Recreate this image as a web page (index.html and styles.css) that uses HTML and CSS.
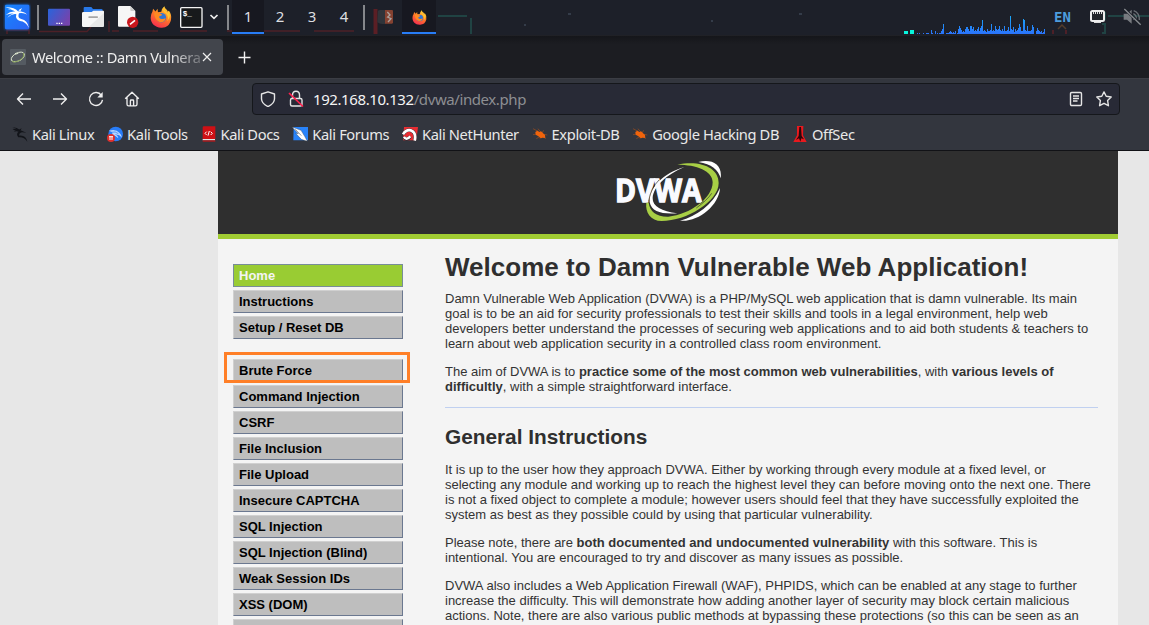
FILE: index.html
```
<!DOCTYPE html>
<html lang="en">
<head>
<meta charset="utf-8">
<title>Welcome :: Damn Vulnerable Web Application</title>
<link rel="stylesheet" href="styles.css">
</head>
<body>
<svg class="defs" width="0" height="0" aria-hidden="true">
  <defs>
    <linearGradient id="kali" x1="0" y1="0" x2="1" y2="1"><stop offset="0" stop-color="#1687ff"/><stop offset="1" stop-color="#2b62f4"/></linearGradient>
    <linearGradient id="desk" x1="0" y1="0" x2="1" y2="0.5"><stop offset="0" stop-color="#2864dc"/><stop offset="1" stop-color="#7444ad"/></linearGradient>
    <linearGradient id="fox" x1="0.8" y1="0" x2="0.3" y2="1"><stop offset="0" stop-color="#ffdc3c"/><stop offset="0.45" stop-color="#ff7e25"/><stop offset="1" stop-color="#f52c50"/></linearGradient>
    <linearGradient id="bars" gradientUnits="userSpaceOnUse" x1="0" y1="16" x2="0" y2="34"><stop offset="0" stop-color="#18a8f8"/><stop offset="1" stop-color="#2b73fa"/></linearGradient>
    <symbol id="dragon" viewBox="0 0 48 48">
      <path d="M1 3Q16 4 24 12L43 20L30 19Q20 21 22 29Q42 27 46 47Q36 32 19 34Q11 23 20 17Q14 14 5 17Q11 12 17 12Q12 7 1 3ZM2 9Q12 7 20 14L7 13ZM20 11L29 7L25 14Z"/>
    </symbol>
    <symbol id="firefox" viewBox="0 0 64 64">
      <path fill="url(#fox)" d="M7 17L9 8L16 16L22 8L23 18L33 17Q34 7 42 1Q42 8 50 12Q51 14 52 17L55 14Q64 25 61 41C57 57 47 64 32 63C14 62 2 50 2 34Q2 24 7 17Z"/>
      <circle cx="33" cy="34" r="14" fill="#3175d3"/>
      <path fill="#ff8a22" d="M12 22Q17 16 27 20L35 25Q35 30 27 30Q26 39 36 38Q43 38 45 34Q45 48 29 47Q13 41 12 22Z"/>
      <path fill="#ffc530" d="M40 2Q34 15 47 22Q55 31 50 45Q64 27 53 14L52 22Q40 12 40 2Z"/>
    </symbol>
    <symbol id="bug" viewBox="0 0 48 42">
      <path d="M3 5L20 14M3 23L21 20M13 35L25 28M18 5L25 14M35 10L30 18M46 24L36 22M41 36L35 28M24 35L27 26" fill="none" stroke="#a04f1c" stroke-width="2"/>
      <path d="M10 15L16 11L22 15L27 13L39 24L40 33L31 32L27 34L18 27L11 23Z" fill="#f0640c"/>
    </symbol>
  </defs>
</svg>

<header class="panel">
  <svg class="circuit" width="1149" height="36" viewBox="0 0 1149 36" fill="none">
    <path stroke="#4d2027" stroke-width="1.5" d="M39 31.5H87L91 27M109 21V32M112 31H119M133 31H158M180 31H207M227 31H300M314 31H354M7 34V30H29V34"/>
    <path stroke="#5b1f25" stroke-width="4" d="M375.5 9V34"/>
    <path stroke="#204343" stroke-width="2" d="M438 16H467M434 18V34M471 18V34M1108 16H1149M1102 13H1105V20M1102 24H1105V33H1102"/>
    <path stroke="#543d2b" stroke-width="1.5" d="M1058 29L1062 25L1066 29"/>
    <path stroke="#4d2027" stroke-width="2" d="M1053 30V34M1066 30V34"/>
    <path fill="#343c49" d="M524 24h2v2h-2zM568 13h3v2h-3zM711 20h2v2h-2zM799 13h3v2h-3z"/>
  </svg>
  <div class="launchers">
    <svg width="28" height="30" viewBox="0 0 84 90">
      <rect class="glow" x="6" y="8" width="73" height="74" rx="4" fill="url(#kali)"/>
      <g fill="#fff"><path d="M7 16Q34 15 45 28Q66 29 72 38L67 35Q55 32 48 34Q42 48 55 51Q73 54 78 78Q68 58 51 57Q36 52 40 37Q26 31 8 39Q23 27 37 29Q26 20 7 16ZM10 23Q23 20 34 26Q21 22 10 23ZM13 47Q26 33 38 35Q24 37 13 47ZM46 25L57 18L52 28Z"/></g>
    </svg>
    <i class="divider"></i>
    <svg class="desktop-icon" width="22" height="18" viewBox="0 0 66 54"><rect width="66" height="51" y="2" rx="3" fill="url(#desk)"/><path fill="#fff" d="M25 44h4v4h-4zM32 44h4v4h-4zM39 44h4v4h-4z"/></svg>
    <svg class="folder-icon" width="22" height="20" viewBox="0 0 66 60"><path fill="#2878e8" d="M5 3q0-3 3-3h20l5 6h25q4 0 4 4v15H5z"/><path fill="#f7f7f7" d="M2 15h27l5-4h30q2 0 2 3v42q0 4-4 4H4q-4 0-4-4V18z"/><path fill="#dedede" d="M66 18v38q0 4-4 4H20z" opacity=".6"/><rect x="19" y="28" width="29" height="5" rx="2" fill="#a6a6a6"/></svg>
    <svg class="document-icon" width="21" height="22" viewBox="0 0 63 66"><path fill="#f6f6f6" d="M3 0h34l15 15v44q0 3-3 3H3q-3 0-3-3V3q0-3 3-3"/><path fill="#ccc" d="M37 0l15 15H40q-3 0-3-3z"/><circle cx="44" cy="49" r="17" fill="#c9171d"/><path stroke="#fff" stroke-width="5" d="M36 55l15-12"/></svg>
    <svg class="firefox-icon" width="22" height="22"><use href="#firefox"/></svg>
    <svg class="terminal-icon" width="23" height="21" viewBox="0 0 69 63"><rect x="2" y="2" width="64" height="59" rx="3" fill="#17191b" stroke="#f4f4f4" stroke-width="4"/><text x="8" y="28" class="terminal-text">$_</text></svg>
    <svg class="chevron" width="10" height="8" viewBox="0 0 10 8"><path d="M1.5 2L5 5.3L8.5 2" fill="none" stroke="#eee" stroke-width="1.7"/></svg>
    <i class="divider"></i>
  </div>
  <nav class="spaces"><b class="active">1</b><b>2</b><b>3</b><b>4</b></nav>
  <i class="divider second"></i>
  <div class="windows">
    <svg class="burp" width="16" height="14" viewBox="0 0 48 42"><path fill="#30343a" d="M3 2Q12-2 24 0V42Q10 43 1 37z"/><path fill="#854231" d="M24 0H45Q48 0 48 4V37Q48 41 45 41H24z"/><path d="M31 6L39 15L32 21L42 26L33 36" fill="none" stroke="#aaa29e" stroke-width="4"/></svg>
    <div class="window active"><svg width="15" height="15"><use href="#firefox"/></svg></div>
  </div>
  <div class="tray">
    <svg class="monitor" width="142" height="36" viewBox="903 0 142 36" shape-rendering="crispEdges">
      <path fill="#08f5dc" d="M904 31h4v3h-4zM910 30h4v4h-4z"/>
      <path fill="url(#bars)" d="M917 34V33h1V34h1V33h1V34h3V33h1V34h2V33h2V34h0V33h1V34h2V30h1V33h1V34h2V31h1V34h1V33h1V34h1V33h2V31h1V29h1V24h1V34h2V33h3V32h1V31h1V32h1V33h1V32h1V33h1V31h1V34h1V33h1V29h1V26h1V28h1V30h1V32h1V31h1V32h1V29h1V27h2V29h1V31h1V26h2V29h1V27h1V31h1V30h1V31h1V29h1V27h1V31h1V28h1V26h1V20h1V31h1V30h1V31h1V32h1V29h1V31h2V30h1V24h1V31h1V30h1V31h1V26h1V29h1V30h1V29h1V26h1V30h1V31h1V29h1V31h1V26h1V31h2V30h1V27h1V31h1V16h1V29h1V30h1V27h1V32h1V29h1V31h1V30h1V28h1V24h1V27h1V31h2V19h1V20h1V30h1V31h1V26h1V31h3V30h1V25h1V27h1V34h2V31h1V28h1V30h1V31h1V32h1V31h1V33h1V32h1V29h1V34Z"/>
    </svg>
    <span class="lang">EN</span>
    <svg width="15" height="14" viewBox="0 0 15 14"><rect x="1" y="1" width="13" height="10" rx="1.5" fill="#22252b" stroke="#eee" stroke-width="2"/><path d="M3.5 2v2M5.5 2v2M7.5 2v2M9.5 2v2M11.5 2v2M4 12.5h7" stroke="#ddd"/></svg>
    <svg class="mute" width="19" height="18" viewBox="0 0 57 54" fill="none"><path fill="#777a7f" d="M2 17H12L26 5V47L12 35H2z"/><path d="M32 8Q50 15 49 36M31 17Q43 23 39 38M32 27V36" stroke="#696d73" stroke-width="4"/><path d="M4 2L53 49" stroke="#1c2028" stroke-width="8"/><path d="M4 3L53 50" stroke="#888b90" stroke-width="4"/></svg>
  </div>
</header>

<div class="tabs">
  <div class="tab">
    <svg width="16" height="16" viewBox="0 0 48 48"><rect width="48" height="48" rx="3" fill="#555b62"/><path d="M15 14Q38 4 43 15C45 29 26 39 11 38Q0 35 6 24Q11 14 25 13" fill="none" stroke="#dce6cf" stroke-width="3"/><path d="M40 12Q47 26 23 37Q10 42 6 36" fill="none" stroke="#88a355" stroke-width="3"/></svg>
    <span>Welcome :: Damn Vulnera</span>
    <svg class="close" width="10" height="10"><path d="M1 1L9 9M9 1L1 9" stroke="#eee" stroke-width="1.2"/></svg>
  </div>
  <svg class="new-tab" width="13" height="13"><path d="M6.5 .5V12.5M.5 6.5H12.5" stroke="#f2f2f2" stroke-width="1.4"/></svg>
</div>

<div class="toolbar">
  <div class="nav-icons">
    <svg viewBox="0 0 16 16"><path d="M15 8H1.5M7 2.5L1.5 8L7 13.5"/></svg>
    <svg viewBox="0 0 16 16"><path d="M1 8H14.5M9 2.5L14.5 8L9 13.5"/></svg>
    <svg viewBox="0 0 16 16"><path d="M13.4 4.3A6.5 6.5 0 1 0 14.5 8.8"/><path d="M14.7 1V6.5H9.3z" fill="#eee" stroke="none"/></svg>
    <svg viewBox="0 0 16 16"><path d="M1.2 7.8L8 1.2L14.8 7.8M3 6.3V13.2Q3 14.8 4.6 14.8H11.4Q13 14.8 13 13.2V6.3M6.4 14.5V9.7Q6.4 9 7.1 9H8.9Q9.6 9 9.6 9.7V14.5"/></svg>
  </div>
  <div class="address">
    <svg width="16" height="16" viewBox="0 0 16 16"><path d="M8 .8L14.5 3V8Q14.2 12.8 8 15.6Q1.8 12.8 1.5 8V3z"/></svg>
    <svg class="lock" width="16" height="18" viewBox="0 0 16 18"><path d="M4.5 8V5Q4.5 1.2 8 1.2Q11.5 1.2 11.5 5V8M3.5 8.5H12.5Q14 8.5 14 10V14.5Q14 16 12.5 16H4Q2.5 16 2.5 14.5V10Q2.5 8.5 4 8.5"/><path d="M1 3L15 16.5" stroke="#ff204e" stroke-width="1.7"/></svg>
    <div class="url"><span>192.168.10.132</span>/dvwa/index.php</div>
    <svg class="reader" width="14" height="16" viewBox="0 0 14 16"><rect x="1.5" y="1.5" width="11" height="13" rx="1.2"/><path d="M4 5H10M4 7.5H10M4 10H8.5"/></svg>
    <svg class="star" width="16" height="16" viewBox="0 0 16 16"><path d="M8 .9L10.2 5.3L15.2 6L11.6 9.5L12.4 14.7L8 12.3L3.6 14.7L4.4 9.5L.8 6L5.8 5.3z"/></svg>
  </div>
</div>

<nav class="bookmarks">
  <div><svg class="ink"><use href="#dragon"/></svg><span>Kali Linux</span></div>
  <div><svg viewBox="0 0 48 48"><circle cx="26" cy="24" r="22" fill="#287cf7"/><path d="M6 14Q27 8 37 20Q43 24 45 35Q36 24 23 26Q33 27 34 37Q26 30 14 25Q22 20 6 14" fill="#b7d5ff"/><path d="M12 19Q26 15 34 23" fill="none" stroke="#287cf7" stroke-width="2"/><circle cx="12" cy="36" r="12" fill="#df302d"/><path d="M6 32H18M9 32V42M15 32V42" stroke="#fff" stroke-width="3"/></svg><span>Kali Tools</span></div>
  <div><svg viewBox="0 0 48 48"><path fill="#cf1015" d="M9 1H43V39H5V5Q5 1 9 1"/><path fill="#e5e5e5" d="M5 39H42V43H5z"/><path fill="#b81518" d="M5 43H43V47H5z"/><path d="M17 17L12 22L17 27M29 17L34 22L29 27M25 15L21 29" fill="none" stroke="#fff" stroke-width="3"/></svg><span>Kali Docs</span></div>
  <div><svg viewBox="0 0 48 48"><path fill="#2883fa" d="M5 3H48V43H4z"/><path fill="#fff" stroke="#27303b" stroke-width="1" d="M0 3L27 13L38 31L46 46L28 40L11 22L19 23z"/><path d="M10 10L28 29" stroke="#27303b" stroke-width="1.5"/></svg><span>Kali Forums</span></div>
  <div><svg viewBox="0 0 48 48"><path fill="#e82d32" d="M6 3H48L43 43H3z"/><path d="M4 25Q12 10 26 13Q44 20 38 43M6 33Q13 46 25 32" fill="none" stroke="#252b32" stroke-width="10"/><path d="M3 25Q12 10 26 13Q44 20 38 44" fill="none" stroke="#fff" stroke-width="8"/><path d="M6 32Q12 45 25 31" fill="none" stroke="#fff" stroke-width="7"/></svg><span>Kali NetHunter</span></div>
  <div><svg><use href="#bug"/></svg><span>Exploit-DB</span></div>
  <div><svg><use href="#bug"/></svg><span>Google Hacking DB</span></div>
  <div><svg viewBox="0 0 48 48"><path fill="#e8191e" d="M15 0H34L33 28L44 48H4L15 28z"/><path fill="#29090b" d="M22 3H27L29 30L36 40L28 37L25 47L21 37L12 42L20 30z"/></svg><span>OffSec</span></div>
</nav>

<div class="viewport">
  <div class="site">
    <header class="site-header">
      <svg width="110" height="62" viewBox="75 36 330 186">
        <g fill="#fff"><path d="M325 42C365 32 398 48 392 91C385 65 365 48 325 42Z"/><path d="M390 120C387 174 322 224 270 218C320 205 368 170 390 120Z"/><path d="M283 57C220 75 176 120 179 163C185 192 215 199 262 196C215 190 187 175 188 150C190 115 230 80 283 57Z"/></g>
        <text x="75" y="162" textLength="260" lengthAdjust="spacingAndGlyphs" class="logo-text">DVWA</text>
        <path d="M176 160Q181 122 207 96" fill="none" stroke="#2f2f2f" stroke-width="2"/>
        <path fill="#a8cf45" d="M262 50C335 36 386 61 386 105C386 160 290 219 215 219C182 219 165 192 169 164L176 164C179 190 200 207 235 206C300 200 368 150 368 103C368 68 320 50 262 50Z"/>
        <path d="M365 136Q352 156 319 180M342 158L331 167" fill="none" stroke="#2f2f2f" stroke-width="2"/>
      </svg>
    </header>
    <div class="columns">
      <nav class="menu">
        <ul><li class="selected">Home</li><li>Instructions</li><li>Setup / Reset DB</li></ul>
        <ul><li class="marked">Brute Force</li><li>Command Injection</li><li>CSRF</li><li>File Inclusion</li><li>File Upload</li><li>Insecure CAPTCHA</li><li>SQL Injection</li><li>SQL Injection (Blind)</li><li>Weak Session IDs</li><li>XSS (DOM)</li><li></li></ul>
      </nav>
      <main>
        <h1>Welcome to Damn Vulnerable Web Application!</h1>
        <p>Damn Vulnerable Web Application (DVWA) is a PHP/MySQL web application that is damn vulnerable. Its main<br>goal is to be an aid for security professionals to test their skills and tools in a legal environment, help web<br>developers better understand the processes of securing web applications and to aid both students &amp; teachers to<br>learn about web application security in a controlled class room environment.</p>
        <p>The aim of DVWA is to <b>practice some of the most common web vulnerabilities</b>, with <b>various levels of<br>difficultly</b>, with a simple straightforward interface.</p>
        <hr>
        <h2>General Instructions</h2>
        <p>It is up to the user how they approach DVWA. Either by working through every module at a fixed level, or<br>selecting any module and working up to reach the highest level they can before moving onto the next one. There<br>is not a fixed object to complete a module; however users should feel that they have successfully exploited the<br>system as best as they possible could by using that particular vulnerability.</p>
        <p>Please note, there are <b>both documented and undocumented vulnerability</b> with this software. This is<br>intentional. You are encouraged to try and discover as many issues as possible.</p>
        <p>DVWA also includes a Web Application Firewall (WAF), PHPIDS, which can be enabled at any stage to further<br>increase the difficulty. This will demonstrate how adding another layer of security may block certain malicious<br>actions. Note, there are also various public methods at bypassing these protections (so this can be seen as an</p>
      </main>
    </div>
  </div>
</div>
</body>
</html>
```
FILE: styles.css
```
*, *::after { box-sizing: border-box; }
html, body { margin: 0; height: 625px; overflow: hidden; }
body { display: flex; flex-direction: column; background: #e7e7e7; font-family: "Noto Sans", sans-serif; }
svg { flex: none; display: block; }
.defs { position: absolute; }

/* Desktop panel */
.panel { position: relative; flex: none; height: 36px; display: flex; background: #1d2029; border-bottom: 1px solid #202126; }
.panel > * { position: relative; }
.panel > .circuit { position: absolute; left: 0; top: 0; }
.launchers { display: flex; align-items: center; width: 229px; padding-left: 3px; height: 34px; }
.glow { filter: drop-shadow(0 0 4px #1478ff); }
.divider { flex: none; width: 2px; height: 25px; background: #85878b; }
.launchers .divider { margin-left: 6px; }
.desktop-icon { margin-left: 9px; }
.folder-icon { margin-left: 12px; }
.document-icon { margin-left: 14px; }
.firefox-icon { margin-left: 11px; }
.terminal-icon { margin-left: 8px; }
.terminal-text { fill: #fff; font: bold 23px "Liberation Mono", monospace; }
.chevron { margin-left: 6px; }
.launchers .chevron + .divider { margin-left: 8px; }
.spaces { display: flex; margin-left: 3px; }
.spaces b { width: 32px; height: 34px; font: 15px/33px "Noto Sans", sans-serif; text-align: center; color: #dedfe0; }
.spaces .active, .window.active { background: #171820; border-bottom: 2px solid #287df6; }
.second { margin: 5px 0 0 3px; }
.windows { display: flex; margin-left: 12px; height: 34px; }
.burp { margin-top: 10px; }
.window { display: flex; align-items: center; justify-content: center; width: 34px; margin-left: 9px; padding-top: 2px; }
.tray { display: flex; align-items: center; margin-left: auto; height: 34px; padding-right: 7px; }
.monitor { margin-top: 2px; }
.lang { margin: 0 18px 0 9px; width: 18px; color: #4d9ddd; font: bold 14px "DejaVu Sans Mono", monospace; }
.mute { margin-left: 18px; }

/* Browser controls */
.tabs { flex: none; display: flex; height: 43px; padding: 3px 2px; background: linear-gradient(#15161a, #1c1d22 20%); border-bottom: 1px solid #3b3d44; }
.tab { display: flex; align-items: center; width: 221px; height: 36px; padding: 0 11px 0 8px; border-radius: 4px; background: #42454c; color: #eee; }
.tab span { width: 168px; margin-left: 6px; white-space: nowrap; font-size: 14.67px; letter-spacing: -.37px; -webkit-mask-image: linear-gradient(90deg, #000 82%, #0004); mask-image: linear-gradient(90deg, #000 82%, #0004); }
.close { margin-left: 2px; }
.new-tab { margin: 12px 0 0 15px; }
.toolbar { flex: none; height: 40px; display: flex; align-items: center; background: #33363e; padding: 0 29px 0 16px; }
.nav-icons { display: flex; gap: 20px; width: 236px; }
.nav-icons svg { width: 16px; height: 16px; fill: none; stroke: #eee; stroke-width: 1.35; stroke-linejoin: round; }
.address { flex: 1; display: flex; align-items: center; height: 32px; padding: 0 7px; border: 1px solid #15171b; border-radius: 4px; background: #282a36; }
.address svg { fill: none; stroke: #e5e5e5; stroke-width: 1.4; stroke-linejoin: round; }
.lock { margin-left: 12px; }
.url { flex: 1; margin-left: 9px; font-size: 15px; letter-spacing: -.41px; color: #8d8e92; white-space: nowrap; }
.url span { color: #f4f4f4; }
.star { margin-left: 13px; }
.bookmarks { flex: none; height: 32px; display: flex; align-items: center; gap: 12.8px; background: #33363e; border-bottom: 1px solid #111216; padding: 0 0 1px 12px; color: #e9e9e9; font-size: 14.67px; letter-spacing: -.37px; }
.bookmarks div { display: flex; align-items: center; gap: 4px; white-space: nowrap; }
.bookmarks span { line-height: 20px; margin-top: -1px; }
.bookmarks svg { width: 16px; height: 16px; }
.ink { fill: #121419; }

/* Web page */
.viewport { flex: 1; min-height: 0; display: flex; padding-left: 218px; overflow: hidden; background: #e7e7e7; font-family: "Liberation Sans", Arial, sans-serif; font-size: 13px; color: #333; }
.site { width: 900px; height: 474px; background: #f4f4f4; overflow: hidden; }
.site-header { height: 88px; padding: 9px 0 0 397px; background: #2f2f2f; border-bottom: 5px solid #a1cc33; }
.logo-text { font: bold 95px "Open Sans", sans-serif; fill: #f9faff; stroke: #f9faff; stroke-width: 4; }
.columns { display: flex; }
.menu { width: 185px; padding: 25px 0 0 15px; }
.menu ul { list-style: none; margin: 0 0 20px; padding: 0; display: flex; flex-direction: column; gap: 3px; }
.menu li { position: relative; height: 23px; padding-left: 5px; border: 1px solid; border-color: #d0d0d0 #6b7890 #6b7890 #d0d0d0; background: #bebebe; color: #000; font-weight: bold; line-height: 21px; }
.menu .selected { background: #9c3; border-color: #788d98; color: #f4f4f4; }
.marked::after { content: ""; position: absolute; left: -10px; top: -8px; width: 186px; height: 31px; border: 3px solid #ff7f27; }
main { width: 653px; margin-left: 42px; padding-top: 13px; white-space: nowrap; }
h1 { margin: 0 0 9px; font-size: 26px; line-height: 30px; letter-spacing: .02px; color: #2f2f2f; }
h2 { margin: 17px 0 13px; font-size: 20.8px; line-height: 24px; color: #2f2f2f; }
p { margin: 0 0 13px; line-height: 15px; }
hr { height: 1px; margin: 0; border: 0; background: #c0d0f0; }
```
